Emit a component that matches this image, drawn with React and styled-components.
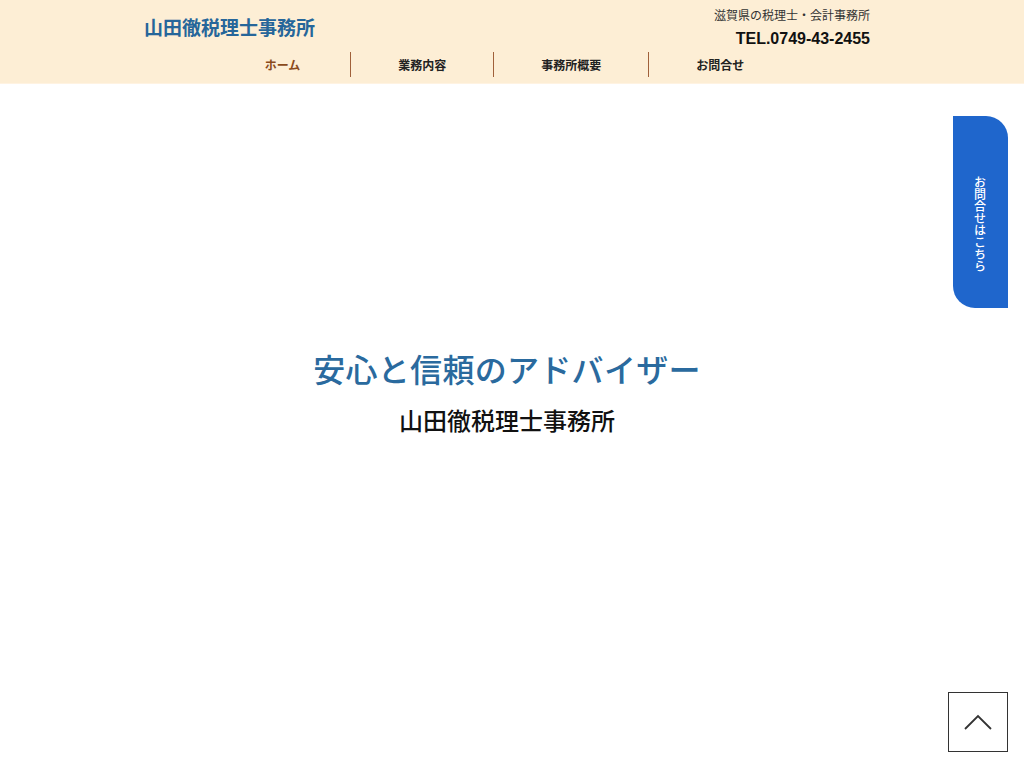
import React from "react";
import styled, { createGlobalStyle } from "styled-components";

const Global = createGlobalStyle`
  html, body { margin: 0; padding: 0; background: #fff; }
  body { font-family: "Liberation Sans", Arial, "Noto Sans CJK JP", sans-serif; color: #222; }
  * { box-sizing: border-box; }
`;

const Page = styled.div`
  min-height: 768px;
  position: relative;
`;

const Header = styled.header`
  background: #fdeed5;
  border-bottom: 1px solid #fff3e2;
  height: 84px;
`;

const Top = styled.div`
  width: 736px;
  margin: 0 auto;
  display: flex;
  justify-content: space-between;
  align-items: flex-start;
  padding: 8px 10px 0 0;
  height: 52px;
`;

const Logo = styled.a`
  font-size: 19px;
  font-weight: bold;
  color: #26669a;
  text-decoration: none;
  margin-top: 5px;
`;

const Contact = styled.div`
  display: flex;
  flex-direction: column;
  align-items: flex-end;
`;

const Tagline = styled.span`
  font-size: 12px;
  color: #333;
  line-height: 16px;
`;

const Tel = styled.span`
  font-size: 16px;
  font-weight: bold;
  color: #111;
  margin-top: 6px;
  line-height: 18px;
`;

const Nav = styled.nav`
  display: flex;
  justify-content: center;
  padding-right: 18px;
`;

const NavItem = styled.a`
  display: flex;
  align-items: center;
  justify-content: center;
  height: 25px;
  padding: 0 ${(p) => (p.$first ? 50 : 47)}px;
  font-size: 12px;
  font-weight: bold;
  color: ${(p) => (p.$active ? "#8a4a1c" : "#222")};
  text-decoration: none;
  border-left: ${(p) => (p.$first ? "none" : "1px solid #a0603a")};
`;

const Hero = styled.main`
  display: flex;
  flex-direction: column;
  align-items: center;
  padding: 267px 10px 0 0;
`;

const Catch = styled.h1`
  margin: 0;
  font-size: 32px;
  font-weight: 500;
  color: #2a6a9e;
  line-height: 40px;
  letter-spacing: 0.3px;
`;

const Sub = styled.h2`
  margin: 16px 0 0;
  font-size: 24px;
  font-weight: 500;
  color: #111;
  line-height: 30px;
`;

const SideTab = styled.a`
  position: absolute;
  top: 116px;
  left: 953px;
  width: 55px;
  height: 192px;
  background: #1f66cc;
  border-radius: 0 22px 0 22px;
  display: flex;
  flex-direction: column;
  align-items: center;
  padding-top: 60px;
  padding-right: 2px;
  text-decoration: none;
`;

const SideLabel = styled.span`
  writing-mode: vertical-rl;
  text-orientation: upright;
  font-family: "Noto Sans CJK JP", sans-serif;
  color: #fff;
  font-size: 12px;
  font-weight: 500;
  line-height: 14px;
  letter-spacing: 0;
`;

const TopButton = styled.button`
  position: absolute;
  top: 692px;
  left: 948px;
  width: 60px;
  height: 60px;
  background: #fff;
  border: 1.5px solid #333;
  display: flex;
  align-items: center;
  justify-content: center;
  padding: 0;
  cursor: pointer;
`;

export default function App() {
  return (
    <Page>
      <Global />
      <Header>
        <Top>
          <Logo href="#">山田徹税理士事務所</Logo>
          <Contact>
            <Tagline>滋賀県の税理士・会計事務所</Tagline>
            <Tel>TEL.0749-43-2455</Tel>
          </Contact>
        </Top>
        <Nav>
          <NavItem href="#" $active $first>ホーム</NavItem>
          <NavItem href="#">業務内容</NavItem>
          <NavItem href="#">事務所概要</NavItem>
          <NavItem href="#">お問合せ</NavItem>
        </Nav>
      </Header>
      <Hero>
        <Catch>安心と信頼のアドバイザー</Catch>
        <Sub>山田徹税理士事務所</Sub>
      </Hero>
      <SideTab href="#">
        <SideLabel>お問合せはこちら</SideLabel>
      </SideTab>
      <TopButton aria-label="top">
        <svg width="30" height="18" viewBox="0 0 30 18" fill="none">
          <polyline points="2,16 15,3 28,16" stroke="#333" strokeWidth="1.8" />
        </svg>
      </TopButton>
    </Page>
  );
}
